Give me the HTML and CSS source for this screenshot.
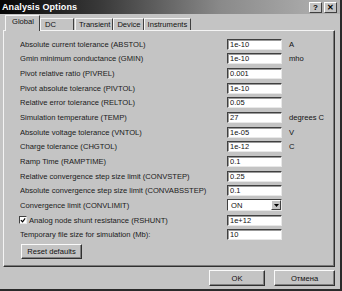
FILE: index.html
```html
<!DOCTYPE html>
<html>
<head>
<meta charset="utf-8">
<link rel="stylesheet" href="styles.css">
</head>
<body>
<div class="window">
  <div class="titlebar">
    <span class="title">Analysis Options</span>
    <div class="tbtns">
      <span class="tbtn">?</span>
      <span class="tbtn">✕</span>
    </div>
  </div>
  <div class="tabs">
    <span class="tab active t-global">Global</span>
    <span class="tab t-dc">DC</span>
    <span class="tab t-tr">Transient</span>
    <span class="tab t-dev">Device</span>
    <span class="tab t-ins">Instruments</span>
  </div>
  <div class="panel">
    <div class="grid">
      <span class="lbl">Absolute current tolerance (ABSTOL)</span><span class="inp">1e-10</span><span class="unit">A</span>
      <span class="lbl">Gmin minimum conductance (GMIN)</span><span class="inp">1e-10</span><span class="unit">mho</span>
      <span class="lbl">Pivot relative ratio (PIVREL)</span><span class="inp">0.001</span><span class="unit"></span>
      <span class="lbl">Pivot absolute tolerance (PIVTOL)</span><span class="inp">1e-10</span><span class="unit"></span>
      <span class="lbl">Relative error tolerance (RELTOL)</span><span class="inp">0.05</span><span class="unit"></span>
      <span class="lbl">Simulation temperature (TEMP)</span><span class="inp">27</span><span class="unit">degrees C</span>
      <span class="lbl">Absolute voltage tolerance (VNTOL)</span><span class="inp">1e-05</span><span class="unit">V</span>
      <span class="lbl">Charge tolerance (CHGTOL)</span><span class="inp">1e-12</span><span class="unit">C</span>
      <span class="lbl">Ramp Time (RAMPTIME)</span><span class="inp">0.1</span><span class="unit"></span>
      <span class="lbl">Relative convergence step size limit (CONVSTEP)</span><span class="inp">0.25</span><span class="unit"></span>
      <span class="lbl">Absolute convergence step size limit (CONVABSSTEP)</span><span class="inp">0.1</span><span class="unit"></span>
      <span class="lbl">Convergence limit (CONVLIMIT)</span><span class="combo"><span class="ctext">ON</span><span class="cbtn"><svg width="5" height="3" viewBox="0 0 5 3"><path d="M0 0H5L2.5 3Z" fill="#000"/></svg></span></span><span class="unit"></span>
      <span class="lbl chkrow"><span class="chk"><svg width="7" height="7" viewBox="0 0 7 7"><path d="M1 3L3 5L6 1" stroke="#000" stroke-width="1.4" fill="none"/></svg></span>Analog node shunt resistance (RSHUNT)</span><span class="inp">1e+12</span><span class="unit"></span>
      <span class="lbl">Temporary file size for simulation (Mb):</span><span class="inp">10</span><span class="unit"></span>
    </div>
    <div class="resetrow"><span class="btn reset">Reset defaults</span></div>
  </div>
  <div class="footer">
    <span class="btn ok">OK</span>
    <span class="btn cancel">Отмена</span>
  </div>
</div>
</body>
</html>
```

FILE: styles.css
```css
html, body {
  margin: 0;
  padding: 0;
  background: #c4c4c4;
}
body {
  font-family: "Liberation Sans", Arial, sans-serif;
  font-size: 7.6px;
  color: #111;
}
.window {
  width: 342px;
  height: 291px;
  box-sizing: border-box;
  background: #c4c4c4;
  border-right: 2px solid #2a2a2a;
  border-bottom: 2px solid #2a2a2a;
  position: relative;
  overflow: hidden;
}
.titlebar {
  height: 14px;
  background: linear-gradient(90deg, #050505 0%, #3a3a3a 30%, #8a8a8a 65%, #b4b4b4 100%);
  display: flex;
  align-items: center;
  justify-content: space-between;
  padding: 0 3px 0 2px;
}
.title {
  color: #fff;
  font-weight: bold;
  font-size: 9px;
  letter-spacing: 0.1px;
}
.tbtns {
  display: flex;
  gap: 2px;
}
.tbtn {
  width: 11px;
  height: 9px;
  background: #c4c4c4;
  border: 1px solid;
  border-color: #fff #404040 #404040 #fff;
  font-size: 8px;
  font-weight: bold;
  line-height: 9px;
  text-align: center;
  color: #000;
}
.tabs {
  display: flex;
  align-items: flex-end;
  height: 15px;
  padding-left: 5px;
  margin-top: 1px;
  position: relative;
  z-index: 2;
}
.tab {
  height: 12px;
  border: 1px solid;
  border-color: #f4f4f4 #404040 transparent #f4f4f4;
  border-bottom: none;
  padding: 0 3px;
  line-height: 12px;
  box-sizing: border-box;
  background: #c4c4c4;
  white-space: nowrap;
}
.tab.active {
  margin-bottom: -1px;
  height: 16px;
  padding-bottom: 2px;
}
.t-global { width: 35px; padding-left: 6px; }
.t-dc { width: 34px; padding-left: 4px; }
.t-tr { margin-left: 1px; padding: 0 2px 0 3px; }
.t-dev { padding: 0 2px 0 3px; }
.t-ins { padding: 0 3px 0 3px; }
.panel {
  margin: 0 5px 0 3px;
  height: 237px;
  box-sizing: border-box;
  border: 1px solid;
  border-color: #f4f4f4 #303030 #303030 #f4f4f4;
  box-shadow: inset -1px -1px 0 #7a7a7a;
  padding: 6px 0 0 16px;
  position: relative;
  z-index: 1;
}
.grid {
  display: grid;
  grid-template-columns: 207px 55px auto;
  grid-auto-rows: 14.65px;
  align-items: center;
}
.lbl {
  white-space: nowrap;
  overflow: hidden;
  color: #1a1a1a;
}
.inp {
  height: 11px;
  box-sizing: border-box;
  background: #fff;
  border: 1px solid;
  border-color: #404040 #e8e8e8 #e8e8e8 #404040;
  box-shadow: inset 1px 1px 0 #9a9a9a;
  padding-left: 2px;
  line-height: 9px;
  font-size: 7.5px;
}
.unit {
  padding-left: 7px;
}
.combo {
  height: 12px;
  box-sizing: border-box;
  background: #fff;
  border: 1px solid;
  border-color: #404040 #e8e8e8 #e8e8e8 #404040;
  display: flex;
  align-items: center;
  justify-content: space-between;
  padding-left: 3px;
}
.cbtn {
  width: 10px;
  height: 10px;
  box-sizing: border-box;
  background: #c4c4c4;
  border: 1px solid;
  border-color: #fff #404040 #404040 #fff;
  display: flex;
  align-items: center;
  justify-content: center;
}
.chkrow {
  display: flex;
  align-items: center;
  margin-left: -1px;
}
.chk {
  width: 8px;
  height: 8px;
  box-sizing: border-box;
  background: #fff;
  border: 1px solid;
  border-color: #404040 #e8e8e8 #e8e8e8 #404040;
  margin-right: 2px;
  display: flex;
  align-items: center;
  justify-content: center;
}
.resetrow {
  margin-top: 2px;
  padding-left: 1px;
}
.btn {
  display: inline-flex;
  align-items: center;
  justify-content: center;
  box-sizing: border-box;
  background: #c4c4c4;
  border: 1px solid;
  border-color: #fafafa #303030 #303030 #fafafa;
  box-shadow: inset -1px -1px 0 #808080;
}
.reset {
  width: 61px;
  height: 15px;
}
.footer {
  display: flex;
  justify-content: flex-end;
  gap: 9px;
  padding: 3px 5px 0 0;
}
.ok {
  width: 56px;
  height: 16px;
}
.cancel {
  width: 61px;
  height: 16px;
}
```
